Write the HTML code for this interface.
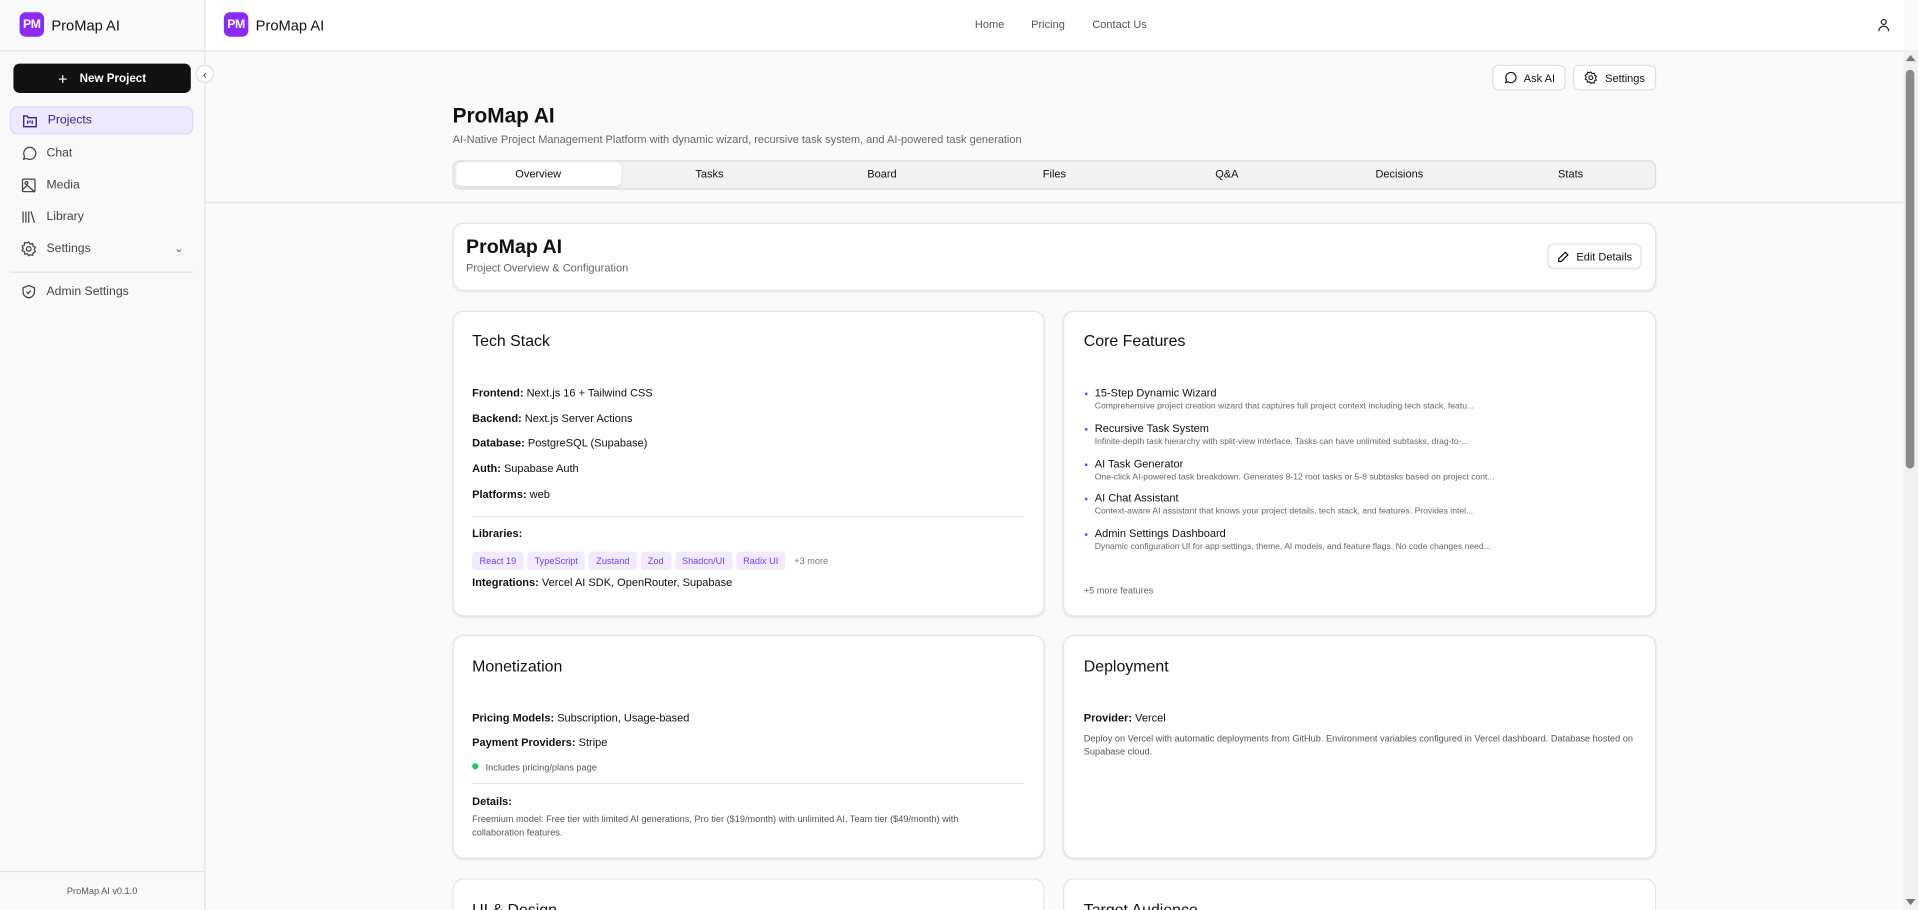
<!DOCTYPE html>
<html><head><meta charset="utf-8"><style>
*{box-sizing:border-box;margin:0;padding:0}
html,body{width:1918px;height:910px;overflow:hidden;background:#fafafa}
body{font-family:"Liberation Sans",sans-serif;color:#111}
#w{position:absolute;left:0;top:0;width:1568px;height:744px;transform:scale(1.22321);transform-origin:0 0;overflow:hidden;background:#fafafa}
.a{position:absolute}
.side{left:0;top:0;width:168px;height:744px;background:#f9f9f9;border-right:1px solid #e5e5e5}
.logo{width:20px;height:20px;border-radius:5px;background:#8b2cf5;color:#fff;font-size:10px;font-weight:bold;display:flex;align-items:center;justify-content:center;letter-spacing:-.3px}
.nav{left:8px;width:150px;height:23px;display:flex;align-items:center;padding-left:9px;font-size:10px;color:#444;gap:8px}
.nav svg{width:13px;height:13px;flex:none}
.card{background:#fff;border:1px solid #e4e4e7;border-radius:9px;box-shadow:0 1px 2px rgba(0,0,0,.08)}
.ct{font-size:13px;font-weight:500;color:#111}
.row{font-size:9px;color:#111}
.row b{font-weight:600}
.btn{background:#fff;border:1px solid #e0e0e0;border-radius:5px;font-size:9px;display:flex;align-items:center;justify-content:center;gap:6px;color:#111}
.tag{display:inline-block;background:#f1ebff;color:#7c3aed;font-size:7.5px;padding:3px 6px;border-radius:3px;margin-right:3px}
.ft{font-size:9px;color:#111;font-weight:500}
.fd{font-size:7px;color:#666;margin-top:3px}
.fi{position:absolute;left:886px}
.fi:before{content:"";position:absolute;left:1px;top:5px;width:2px;height:2px;background:#7c3aed}
</style></head><body><div id="w">
<div class="a side"></div>
<div class="a" style="left:0;top:41px;width:1556px;height:1px;background:#e5e5e5"></div>
<div class="a logo" style="left:16px;top:10px">PM</div>
<div class="a" style="left:42px;top:14px;font-size:12px;font-weight:500">ProMap AI</div>
<div class="a" style="left:168px;top:0;width:1388px;height:41px;background:#fff"></div>
<div class="a logo" style="left:183px;top:10px">PM</div>
<div class="a" style="left:209px;top:14px;font-size:12px;font-weight:500">ProMap AI</div>
<div class="a" style="left:797px;top:15px;font-size:9px;color:#555">Home</div>
<div class="a" style="left:843px;top:15px;font-size:9px;color:#555">Pricing</div>
<div class="a" style="left:893px;top:15px;font-size:9px;color:#555">Contact Us</div>
<svg class="a" style="left:1535px;top:15px" width="10" height="11" viewBox="0 0 10 11" fill="none" stroke="#222" stroke-width="1"><circle cx="5" cy="3" r="2"/><path d="M1 10.5c0-2.5 1.8-4 4-4s4 1.5 4 4"/></svg>

<div class="a" style="left:11px;top:52px;width:145px;height:24px;background:#111;border-radius:5px;color:#fff;font-size:9.5px;font-weight:600;display:flex;align-items:center;justify-content:center;gap:10px"><span style="font-size:13px;font-weight:300">+</span>New Project</div>
<div class="a" style="left:160px;top:53px;width:15px;height:15px;border-radius:50%;background:#fff;border:1px solid #ddd;font-size:9px;display:flex;align-items:center;justify-content:center">&#8249;</div>
<div class="a nav" style="top:87px;background:#ede9fe;border:1px solid #ddd6fe;border-radius:6px;color:#3b1b8a"><svg viewBox="0 0 14 14" fill="none" stroke="#3b1b8a" stroke-width="1.2"><path d="M1.5 3h3l1 1.5h7v8h-11z"/><path d="M5 7v3M7 7v2M9 7v3"/></svg>Projects</div>
<div class="a nav" style="top:114px"><svg viewBox="0 0 14 14" fill="none" stroke="#444" stroke-width="1.1"><path d="M2.5 12l.8-2.5A5.3 5.3 0 1 1 5 11.3z"/></svg>Chat</div>
<div class="a nav" style="top:140px"><svg viewBox="0 0 14 14" fill="none" stroke="#444" stroke-width="1.1"><rect x="1.5" y="1.5" width="11" height="11" rx="1"/><circle cx="5" cy="5" r="1.2"/><path d="M1.5 11l4-4 7 6"/></svg>Media</div>
<div class="a nav" style="top:166px"><svg viewBox="0 0 14 14" fill="none" stroke="#444" stroke-width="1.1"><path d="M2 2v10M4.5 2v10M7 2v10M9 2l3 10"/></svg>Library</div>
<div class="a nav" style="top:192px"><svg viewBox="0 0 14 14" fill="none" stroke="#444" stroke-width="1.1"><circle cx="7" cy="7" r="2"/><path d="M7 1l1.3 1.8 2.2-.5.3 2.2 2 1-1 2 1 2-2 .9-.3 2.2-2.2-.5L7 13l-1.3-1.8-2.2.5-.3-2.2-2-1 1-2-1-2 2-1 .3-2.2 2.2.5z"/></svg>Settings<span style="position:absolute;right:8px;font-size:9px;color:#555">&#8964;</span></div>
<div class="a" style="left:8px;top:222px;width:150px;height:1px;background:#e3e3e3"></div>
<div class="a nav" style="top:227px"><svg viewBox="0 0 14 14" fill="none" stroke="#444" stroke-width="1.1"><path d="M7 1.5l5 2v3.5c0 3-2.2 5-5 5.5-2.8-.5-5-2.5-5-5.5V3.5z"/><path d="M5 7l1.5 1.5L9 6"/></svg>Admin Settings</div>
<div class="a" style="left:0;top:712px;width:167px;height:1px;background:#e3e3e3"></div>
<div class="a" style="left:0;top:724px;width:167px;text-align:center;font-size:7.5px;color:#555">ProMap AI v0.1.0</div>

<div class="a" style="left:168px;top:165px;width:1388px;height:1px;background:#e5e5e5"></div>
<div class="a btn" style="left:1220px;top:53px;width:60px;height:21px"><svg width="11" height="11" viewBox="0 0 14 14" fill="none" stroke="#111" stroke-width="1.2"><path d="M2.5 12l.8-2.5A5.3 5.3 0 1 1 5 11.3z"/></svg>Ask AI</div>
<div class="a btn" style="left:1286px;top:53px;width:68px;height:21px"><svg width="11" height="11" viewBox="0 0 14 14" fill="none" stroke="#111" stroke-width="1.1"><circle cx="7" cy="7" r="2"/><path d="M7 1l1.3 1.8 2.2-.5.3 2.2 2 1-1 2 1 2-2 .9-.3 2.2-2.2-.5L7 13l-1.3-1.8-2.2.5-.3-2.2-2-1 1-2-1-2 2-1 .3-2.2 2.2.5z"/></svg>Settings</div>
<div class="a" style="left:370px;top:85px;font-size:17px;font-weight:bold">ProMap AI</div>
<div class="a" style="left:370px;top:109px;font-size:9px;color:#666">AI-Native Project Management Platform with dynamic wizard, recursive task system, and AI-powered task generation</div>
<div class="a" style="left:370px;top:131px;width:984px;height:24px;background:#f2f2f3;border:1px solid #ddd;border-radius:6px"></div>
<div class="a" style="left:373px;top:133px;width:135px;height:19px;background:#fff;border-radius:4px;box-shadow:0 1px 2px rgba(0,0,0,.1)"></div>
<div class="a" style="left:370px;top:137px;width:984px;display:flex;font-size:9px;color:#111">
<span style="width:140px;text-align:center">Overview</span><span style="width:140px;text-align:center">Tasks</span><span style="width:142px;text-align:center">Board</span><span style="width:140px;text-align:center">Files</span><span style="width:142px;text-align:center">Q&amp;A</span><span style="width:140px;text-align:center">Decisions</span><span style="width:140px;text-align:center">Stats</span></div>

<div class="a card" style="left:370px;top:182px;width:984px;height:56px"></div>
<div class="a" style="left:381px;top:194px;font-size:16px;font-weight:bold">ProMap AI</div>
<div class="a" style="left:381px;top:214px;font-size:9px;color:#666">Project Overview &amp; Configuration</div>
<div class="a btn" style="left:1265px;top:199px;width:77px;height:21px"><svg width="10" height="10" viewBox="0 0 12 12" fill="none" stroke="#111" stroke-width="1.2"><path d="M8 1.5l2.5 2.5L4 10.5H1.5V8z"/></svg>Edit Details</div>

<div class="a card" style="left:370px;top:254px;width:484px;height:250px"></div>
<div class="a ct" style="left:386px;top:271px">Tech Stack</div>
<div class="a row" style="left:386px;top:316px"><b>Frontend:</b> Next.js 16 + Tailwind CSS</div>
<div class="a row" style="left:386px;top:337px"><b>Backend:</b> Next.js Server Actions</div>
<div class="a row" style="left:386px;top:357px"><b>Database:</b> PostgreSQL (Supabase)</div>
<div class="a row" style="left:386px;top:378px"><b>Auth:</b> Supabase Auth</div>
<div class="a row" style="left:386px;top:399px"><b>Platforms:</b> web</div>
<div class="a" style="left:386px;top:422px;width:451px;height:1px;background:#e5e5e5"></div>
<div class="a row" style="left:386px;top:431px"><b>Libraries:</b></div>
<div class="a" style="left:386px;top:448px;white-space:nowrap"><span class="tag">React 19</span><span class="tag">TypeScript</span><span class="tag">Zustand</span><span class="tag">Zod</span><span class="tag">Shadcn/UI</span><span class="tag">Radix UI</span><span style="font-size:7.5px;color:#777;margin-left:4px">+3 more</span></div>
<div class="a row" style="left:386px;top:471px"><b>Integrations:</b> Vercel AI SDK, OpenRouter, Supabase</div>

<div class="a card" style="left:869px;top:254px;width:485px;height:250px"></div>
<div class="a ct" style="left:886px;top:271px">Core Features</div>
<div class="fi" style="top:316px"><div class="ft" style="padding-left:9px">15-Step Dynamic Wizard</div><div class="fd" style="padding-left:9px">Comprehensive project creation wizard that captures full project context including tech stack, featu...</div></div>
<div class="fi" style="top:345px"><div class="ft" style="padding-left:9px">Recursive Task System</div><div class="fd" style="padding-left:9px">Infinite-depth task hierarchy with split-view interface. Tasks can have unlimited subtasks, drag-to-...</div></div>
<div class="fi" style="top:374px"><div class="ft" style="padding-left:9px">AI Task Generator</div><div class="fd" style="padding-left:9px">One-click AI-powered task breakdown. Generates 8-12 root tasks or 5-8 subtasks based on project cont...</div></div>
<div class="fi" style="top:402px"><div class="ft" style="padding-left:9px">AI Chat Assistant</div><div class="fd" style="padding-left:9px">Context-aware AI assistant that knows your project details, tech stack, and features. Provides intel...</div></div>
<div class="fi" style="top:431px"><div class="ft" style="padding-left:9px">Admin Settings Dashboard</div><div class="fd" style="padding-left:9px">Dynamic configuration UI for app settings, theme, AI models, and feature flags. No code changes need...</div></div>
<div class="a" style="left:886px;top:478px;font-size:7.5px;color:#666">+5 more features</div>

<div class="a card" style="left:370px;top:519px;width:484px;height:183px"></div>
<div class="a ct" style="left:386px;top:537px">Monetization</div>
<div class="a row" style="left:386px;top:582px"><b>Pricing Models:</b> Subscription, Usage-based</div>
<div class="a row" style="left:386px;top:602px"><b>Payment Providers:</b> Stripe</div>
<div class="a" style="left:386px;top:624px;width:5px;height:5px;border-radius:50%;background:#22c55e"></div>
<div class="a" style="left:397px;top:623px;font-size:7.5px;color:#555">Includes pricing/plans page</div>
<div class="a" style="left:386px;top:640px;width:451px;height:1px;background:#e5e5e5"></div>
<div class="a row" style="left:386px;top:650px"><b>Details:</b></div>
<div class="a" style="left:386px;top:665px;width:440px;font-size:7.5px;color:#555;line-height:10.5px">Freemium model: Free tier with limited AI generations, Pro tier ($19/month) with unlimited AI, Team tier ($49/month) with collaboration features.</div>

<div class="a card" style="left:869px;top:519px;width:485px;height:183px"></div>
<div class="a ct" style="left:886px;top:537px">Deployment</div>
<div class="a row" style="left:886px;top:582px"><b>Provider:</b> Vercel</div>
<div class="a" style="left:886px;top:599px;width:455px;font-size:7.5px;color:#555;line-height:10.5px">Deploy on Vercel with automatic deployments from GitHub. Environment variables configured in Vercel dashboard. Database hosted on Supabase cloud.</div>

<div class="a card" style="left:370px;top:718px;width:484px;height:26px;border-bottom:none;border-bottom-left-radius:0;border-bottom-right-radius:0;box-shadow:none"></div>
<div class="a ct" style="left:386px;top:736px;height:8px;overflow:hidden">UI &amp; Design</div>
<div class="a card" style="left:869px;top:718px;width:485px;height:26px;border-bottom:none;border-bottom-left-radius:0;border-bottom-right-radius:0;box-shadow:none"></div>
<div class="a ct" style="left:886px;top:736px;height:8px;overflow:hidden">Target Audience</div>

<div class="a" style="left:1556px;top:41px;width:12px;height:703px;background:#f1f1f1"></div>
<div class="a" style="left:1558px;top:57px;width:7px;height:326px;background:#8a8a8a;border-radius:4px"></div>
<div class="a" style="left:1558px;top:45px;width:0;height:0;border-left:4px solid transparent;border-right:4px solid transparent;border-bottom:5px solid #777"></div>
<div class="a" style="left:1558px;top:735px;width:0;height:0;border-left:4px solid transparent;border-right:4px solid transparent;border-top:5px solid #777"></div>
</div></body></html>
